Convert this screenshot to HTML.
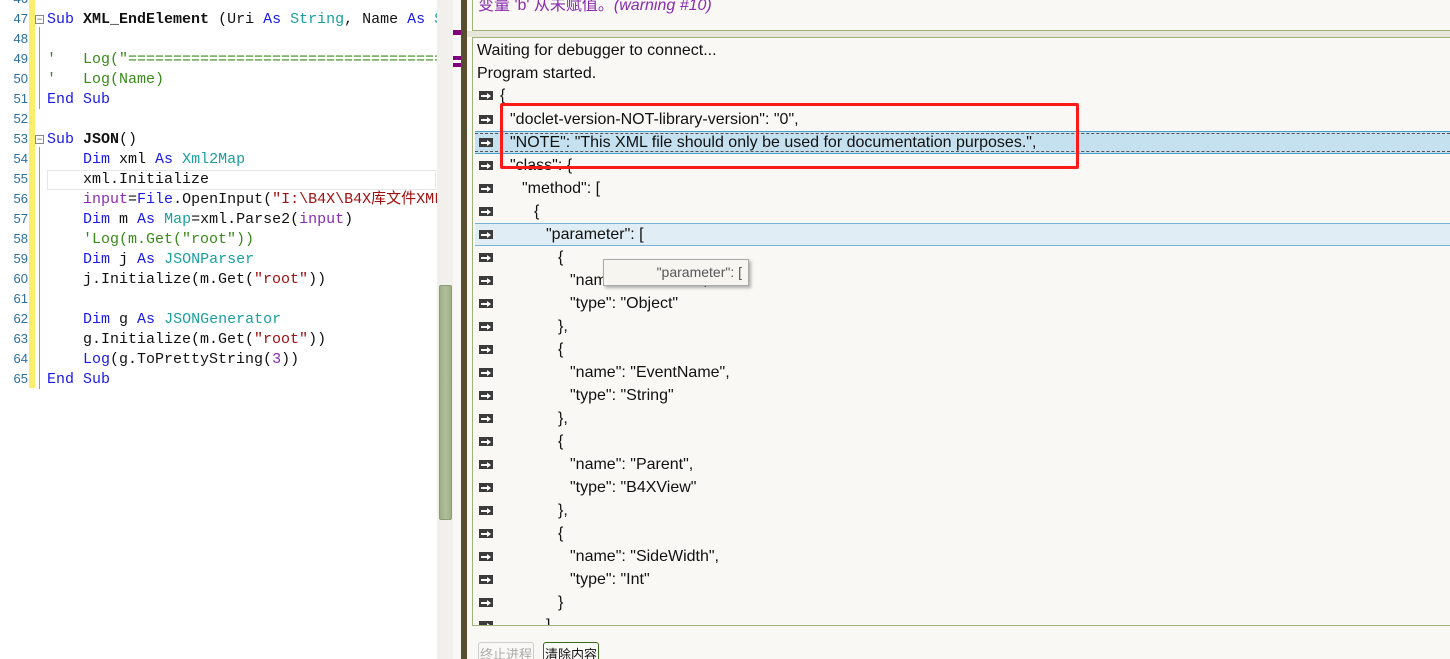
<!DOCTYPE html>
<html><head><meta charset="utf-8"><style>
*{margin:0;padding:0;box-sizing:border-box}
html,body{width:1450px;height:659px;overflow:hidden}
body{background:#f9f8f4;position:relative;font-family:"Liberation Sans","Noto Sans CJK SC",sans-serif}
.code{position:absolute;left:0;top:0;width:437px;height:659px;background:#fff;overflow:hidden}
.ln{position:absolute;left:8px;width:20px;text-align:right;font:13px "Liberation Sans",sans-serif;color:#2b6f9e}
.ybar{position:absolute;left:29px;top:0;width:6px;height:388px;background:#fbee6c}
.cl{position:absolute;left:47px;font:15px "Liberation Mono","Noto Sans CJK SC",monospace;white-space:pre;color:#111;line-height:20px}
.k{color:#1a1ae6}.t{color:#1a9f9f}.c{color:#3a8a1a}.s{color:#a01010}.v{color:#8a2bb0}.b{font-weight:bold}
.fold{position:absolute;left:39px;width:1px;background:#999}
.box{position:absolute;width:9px;height:9px;border:1px solid #888;background:#fff;left:35px;font:9px sans-serif;line-height:7px;text-align:center;color:#444}
.sb{position:absolute;left:437px;top:0;width:16px;height:659px;background:#f1f0ec}
.thumb{position:absolute;left:439px;top:285px;width:13px;height:235px;background:linear-gradient(90deg,#9eae85,#b0bf98,#9eae85);border:1px solid #8c9a78;border-radius:2px}
.row{position:absolute;left:0;right:0;height:23px;font-size:16px;color:#111;line-height:23px;white-space:pre}
.ar{position:absolute;left:6px;top:7px;width:14px;height:9px;background:#3b3b3b}
.ar:after{content:"";position:absolute;left:2px;top:4px;width:6px;height:2px;background:#fff}
.ar:before{content:"";position:absolute;left:8px;top:2px;border-left:4px solid #fff;border-top:3px solid transparent;border-bottom:3px solid transparent}
.tx{position:absolute;top:0}
</style></head><body>
<div class="code">
<div class="ybar"></div>
<div class="fold" style="top:27px;height:82px"></div>
<div class="fold" style="top:147px;height:242px"></div>
<div class="box" style="top:15px">−</div><div class="box" style="top:135px">−</div>
<div style="position:absolute;left:47px;top:170px;width:389px;height:20px;border:1px solid #e6e6e6"></div>
<div class="ln" style="top:-9px">46</div>
<div class="ln" style="top:11px">47</div><div class="ln" style="top:31px">48</div><div class="ln" style="top:51px">49</div><div class="ln" style="top:71px">50</div><div class="ln" style="top:91px">51</div><div class="ln" style="top:111px">52</div><div class="ln" style="top:131px">53</div><div class="ln" style="top:151px">54</div><div class="ln" style="top:171px">55</div><div class="ln" style="top:191px">56</div><div class="ln" style="top:211px">57</div><div class="ln" style="top:231px">58</div><div class="ln" style="top:251px">59</div><div class="ln" style="top:271px">60</div><div class="ln" style="top:291px">61</div><div class="ln" style="top:311px">62</div><div class="ln" style="top:331px">63</div><div class="ln" style="top:351px">64</div><div class="ln" style="top:371px">65</div>
<div class="cl" style="top:10px"><span class="k">Sub</span> <span class="b">XML_EndElement</span> (Uri <span class="k">As</span> <span class="t">String</span>, Name <span class="k">As</span> <span class="t">String</span>)</div>
<div class="cl c" style="top:50px">'   Log("==========================================</div>
<div class="cl c" style="top:70px">'   Log(Name)</div>
<div class="cl k" style="top:90px">End Sub</div>
<div class="cl" style="top:130px"><span class="k">Sub</span> <span class="b">JSON</span>()</div>
<div class="cl" style="top:150px">    <span class="k">Dim</span> xml <span class="k">As</span> <span class="t">Xml2Map</span></div>
<div class="cl" style="top:170px">    xml.Initialize</div>
<div class="cl" style="top:190px">    <span class="v">input</span>=<span class="k">File</span>.OpenInput(<span class="s">"I:\B4X\B4X库文件XML"</span></div>
<div class="cl" style="top:210px">    <span class="k">Dim</span> m <span class="k">As</span> <span class="t">Map</span>=xml.Parse2(<span class="v">input</span>)</div>
<div class="cl c" style="top:230px">    'Log(m.Get("root"))</div>
<div class="cl" style="top:250px">    <span class="k">Dim</span> j <span class="k">As</span> <span class="t">JSONParser</span></div>
<div class="cl" style="top:270px">    j.Initialize(m.Get(<span class="s">"root"</span>))</div>
<div class="cl" style="top:310px">    <span class="k">Dim</span> g <span class="k">As</span> <span class="t">JSONGenerator</span></div>
<div class="cl" style="top:330px">    g.Initialize(m.Get(<span class="s">"root"</span>))</div>
<div class="cl" style="top:350px">    <span class="k">Log</span>(g.ToPrettyString(<span class="v">3</span>))</div>
<div class="cl k" style="top:370px">End Sub</div>
</div>
<div class="sb"></div><div class="thumb"></div>
<div style="position:absolute;left:453px;top:30px;width:8px;height:5px;background:#800080"></div>
<div style="position:absolute;left:453px;top:56px;width:8px;height:4px;background:#800080"></div>
<div style="position:absolute;left:453px;top:63px;width:8px;height:4px;background:#800080"></div>
<div style="position:absolute;left:461px;top:0;width:6px;height:659px;background:#574d2f"></div>
<div style="position:absolute;left:472px;top:0;width:978px;height:31px;border-left:1px solid #9cb37a;border-bottom:1px solid #9cb37a;background:#f9f8f4"></div>
<div style="position:absolute;left:478px;top:-9px;font-size:16px;color:#8a2bb0">变量 'b' 从未赋值。<i>(warning #10)</i></div>
<div style="position:absolute;left:467px;top:31px;width:983px;height:6px;background:#e8e6da"></div>
<div style="position:absolute;left:472px;top:37px;width:978px;height:589px;border-left:1px solid #9cb37a;border-top:1px solid #9cb37a;border-bottom:1px solid #9cb37a"></div>
<div style="position:absolute;left:473px;top:38px;width:977px;height:587px;overflow:hidden">
<div style="position:absolute;left:4px;top:1px;font-size:16px;line-height:23px;color:#111">Waiting for debugger to connect...<br>Program started.</div>
<div style="position:absolute;left:2px;right:0;top:93px;height:23px;background:#c5e1ef;border-top:1px solid #4a9ecb;border-bottom:1px solid #4a9ecb"><div style="position:absolute;left:0;right:0;top:1px;bottom:1px;border-top:1px dashed #555;border-bottom:1px dashed #555"></div></div>
<div style="position:absolute;left:2px;right:0;top:185px;height:23px;background:#e0edf4;border-top:1px solid #79b4d6;border-bottom:1px solid #79b4d6"></div>
<div class="row" style="top:46px"><div class="ar"></div><span class="tx" style="left:27px">{</span></div>
<div class="row" style="top:70px"><div class="ar"></div><span class="tx" style="left:37px">"doclet-version-NOT-library-version": "0",</span></div>
<div class="row" style="top:93px"><div class="ar"></div><span class="tx" style="left:37px">"NOTE": "This XML file should only be used for documentation purposes.",</span></div>
<div class="row" style="top:116px"><div class="ar"></div><span class="tx" style="left:37px">"class": {</span></div>
<div class="row" style="top:139px"><div class="ar"></div><span class="tx" style="left:49px">"method": [</span></div>
<div class="row" style="top:162px"><div class="ar"></div><span class="tx" style="left:61px">{</span></div>
<div class="row" style="top:185px"><div class="ar"></div><span class="tx" style="left:73px">"parameter": [</span></div>
<div class="row" style="top:208px"><div class="ar"></div><span class="tx" style="left:85px">{</span></div>
<div class="row" style="top:231px"><div class="ar"></div><span class="tx" style="left:97px">"name": "Callback",</span></div>
<div class="row" style="top:254px"><div class="ar"></div><span class="tx" style="left:97px">"type": "Object"</span></div>
<div class="row" style="top:277px"><div class="ar"></div><span class="tx" style="left:85px">},</span></div>
<div class="row" style="top:300px"><div class="ar"></div><span class="tx" style="left:85px">{</span></div>
<div class="row" style="top:323px"><div class="ar"></div><span class="tx" style="left:97px">"name": "EventName",</span></div>
<div class="row" style="top:346px"><div class="ar"></div><span class="tx" style="left:97px">"type": "String"</span></div>
<div class="row" style="top:369px"><div class="ar"></div><span class="tx" style="left:85px">},</span></div>
<div class="row" style="top:392px"><div class="ar"></div><span class="tx" style="left:85px">{</span></div>
<div class="row" style="top:415px"><div class="ar"></div><span class="tx" style="left:97px">"name": "Parent",</span></div>
<div class="row" style="top:438px"><div class="ar"></div><span class="tx" style="left:97px">"type": "B4XView"</span></div>
<div class="row" style="top:461px"><div class="ar"></div><span class="tx" style="left:85px">},</span></div>
<div class="row" style="top:484px"><div class="ar"></div><span class="tx" style="left:85px">{</span></div>
<div class="row" style="top:507px"><div class="ar"></div><span class="tx" style="left:97px">"name": "SideWidth",</span></div>
<div class="row" style="top:530px"><div class="ar"></div><span class="tx" style="left:97px">"type": "Int"</span></div>
<div class="row" style="top:553px"><div class="ar"></div><span class="tx" style="left:85px">}</span></div>
<div class="row" style="top:576px"><div class="ar"></div><span class="tx" style="left:73px">],</span></div>
</div>
<div style="position:absolute;left:603px;top:259px;width:146px;height:27px;background:#f6f5f0;border:1px solid #aaa;box-shadow:2px 2px 3px rgba(0,0,0,.3);font-size:14px;color:#555;text-align:right;padding-right:6px;line-height:25px">"parameter": [</div>
<div style="position:absolute;left:500px;top:103px;width:579px;height:66px;border:3px solid #ff1a1a;border-radius:2px"></div>
<div style="position:absolute;left:478px;top:642px;width:56px;height:24px;border:1px solid #ccc;border-radius:3px;font-size:13px;color:#aaa;text-align:center;line-height:24px">终止进程</div>
<div style="position:absolute;left:543px;top:642px;width:56px;height:24px;border:1px solid #3a6a1a;border-radius:3px;font-size:13px;color:#111;text-align:center;line-height:24px;background:#fafaf6">清除内容</div>
</body></html>
